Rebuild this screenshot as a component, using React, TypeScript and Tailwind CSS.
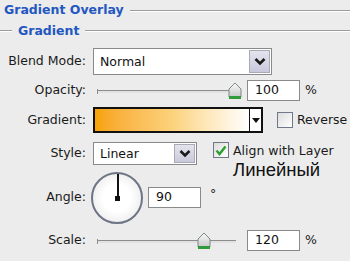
import React from 'react'

const font = { fontFamily: '"DejaVu Sans", Verdana, sans-serif' }

function Chevron() {
  return (
    <svg width="12" height="9" viewBox="0 0 12 9">
      <polyline points="1.5,2 6,6.5 10.5,2" fill="none" stroke="#1a1a1a" strokeWidth="2.6" />
    </svg>
  )
}

function SelectBox({ value, width }: { value: string; width: string }) {
  return (
    <div className={`flex h-full ${width} items-stretch border border-[#8a8a8a] bg-white`}>
      <div className="flex flex-1 items-center pl-[6px] pt-[2px] text-[12.5px] text-[#111]">{value}</div>
      <div className="m-[1px] flex w-[21px] items-center justify-center border border-[#a9a9b8] bg-gradient-to-b from-[#e4e4ee] to-[#c9c9dc]">
        <Chevron />
      </div>
    </div>
  )
}

function Slider({ pos }: { pos: number }) {
  return (
    <div className="relative h-[18px] w-[139px]">
      <div className="absolute left-0 right-0 top-[8px] h-[3px] border-t border-[#8c8c8c] bg-[#e2e2e2]" />
      <div className="absolute left-0 top-[7px] h-[5px] w-[1px] bg-[#8c8c8c]" />
      <svg className="absolute top-0" style={{ left: pos }} width="14" height="18" viewBox="0 0 14 18">
        <defs>
          <linearGradient id={`th${pos}`} x1="0" y1="0" x2="0" y2="1">
            <stop offset="0" stopColor="#fafafa" />
            <stop offset="1" stopColor="#c9c9c9" />
          </linearGradient>
        </defs>
        <path d="M1 7 L7 1 L13 7 L13 15 L1 15 Z" fill={`url(#th${pos})`} stroke="#7c8a80" strokeWidth="1" />
        <rect x="1" y="14" width="12" height="3" fill="#2f9b3a" />
      </svg>
    </div>
  )
}

function TextInput({ value }: { value: string }) {
  return (
    <div className="flex h-[21px] w-[53px] items-center border border-[#8a8a8a] bg-white pl-[7px] text-[12.5px] text-[#111]">
      {value}
    </div>
  )
}

function Checkbox({ checked }: { checked?: boolean }) {
  return (
    <div className="flex h-[16px] w-[16px] items-center justify-center border border-[#6f7788] bg-gradient-to-br from-[#dcdcdc] to-[#ffffff]">
      {checked && (
        <svg width="12" height="11" viewBox="0 0 12 11">
          <polyline points="1.5,5.5 4.5,9 10.5,1.5" fill="none" stroke="#2ea02e" strokeWidth="2.4" />
        </svg>
      )}
    </div>
  )
}

function Label({ children }: { children: React.ReactNode }) {
  return <div className="w-[88px] shrink-0 pr-[2px] text-right text-[12.5px] text-[#1a1a1a]">{children}</div>
}

export default function App() {
  return (
    <div className="h-[261px] w-[350px] overflow-hidden bg-[#ececec]" style={font}>
      <div className="flex h-[20px] items-center pl-[4px] pt-[1px]">
        <span className="text-[12.5px] font-bold text-[#2457c0]">Gradient Overlay</span>
        <div className="ml-[6px] h-[2px] flex-1 border-t border-[#9c9c9c] bg-white" />
      </div>
      <div className="flex h-[22px] items-center">
        <div className="h-[2px] w-[12px] border-t border-[#9c9c9c] bg-white" />
        <span className="px-[6px] text-[12.5px] font-bold text-[#2457c0]">Gradient</span>
        <div className="h-[2px] flex-1 border-t border-[#9c9c9c] bg-white" />
      </div>

      <div className="mt-[6px] flex h-[27px] items-center">
        <Label>Blend Mode:</Label>
        <div className="ml-[5px] h-full">
          <SelectBox value="Normal" width="w-[179px]" />
        </div>
      </div>

      <div className="mt-[5px] flex h-[21px] items-center">
        <Label>Opacity:</Label>
        <div className="ml-[9px]">
          <Slider pos={131} />
        </div>
        <div className="ml-[11px]">
          <TextInput value="100" />
        </div>
        <span className="ml-[5px] text-[12.5px] text-[#1a1a1a]">%</span>
      </div>

      <div className="mt-[6px] flex h-[26px] items-center">
        <Label>Gradient:</Label>
        <div className="ml-[5px] flex h-full w-[170px] border-2 border-[#111] bg-white">
          <div className="flex-1 bg-gradient-to-r from-[#f7a300] via-[#fcd27a] to-[#ffffff]" />
          <div className="flex w-[12px] items-center justify-center border-l border-[#111]">
            <svg width="8" height="5" viewBox="0 0 8 5">
              <polygon points="0,0 8,0 4,5" fill="#111" />
            </svg>
          </div>
        </div>
        <div className="ml-[14px]">
          <Checkbox />
        </div>
        <span className="ml-[4px] text-[12.5px] text-[#1a1a1a]">Reverse</span>
      </div>

      <div className="relative mt-[9px] flex h-[23px] items-center">
        <Label>Style:</Label>
        <div className="ml-[5px] h-full">
          <SelectBox value="Linear" width="w-[104px]" />
        </div>
        <div className="ml-[16px] self-start">
          <Checkbox checked />
        </div>
        <span className="ml-[4px] self-start text-[12.5px] text-[#1a1a1a]">Align with Layer</span>
        <span
          className="absolute left-[233px] top-[19px] text-[18.5px] leading-none text-[#111]"
          style={{ fontFamily: '"Liberation Sans", Arial, sans-serif' }}
        >
          Линейный
        </span>
      </div>

      <div className="mt-[7px] flex h-[51px] items-center">
        <Label>Angle:</Label>
        <div className="relative ml-[3px] h-[52px] w-[52px] rounded-full border-2 border-[#6e7586] bg-[radial-gradient(circle,#ffffff_40%,#e3e3e3_100%)]">
          <div className="absolute left-[24px] top-0 h-[24px] w-[1.5px] bg-[#111]" />
          <div className="absolute left-[22px] top-[22px] h-[5px] w-[5px] bg-[#111]" />
        </div>
        <div className="ml-[5px]">
          <TextInput value="90" />
        </div>
        <span className="ml-[9px] -mt-[6px] text-[12.5px] text-[#1a1a1a]">°</span>
      </div>

      <div className="mt-[7px] flex h-[21px] items-center">
        <Label>Scale:</Label>
        <div className="ml-[9px]">
          <Slider pos={100} />
        </div>
        <div className="ml-[11px]">
          <TextInput value="120" />
        </div>
        <span className="ml-[5px] text-[12.5px] text-[#1a1a1a]">%</span>
      </div>
    </div>
  )
}
